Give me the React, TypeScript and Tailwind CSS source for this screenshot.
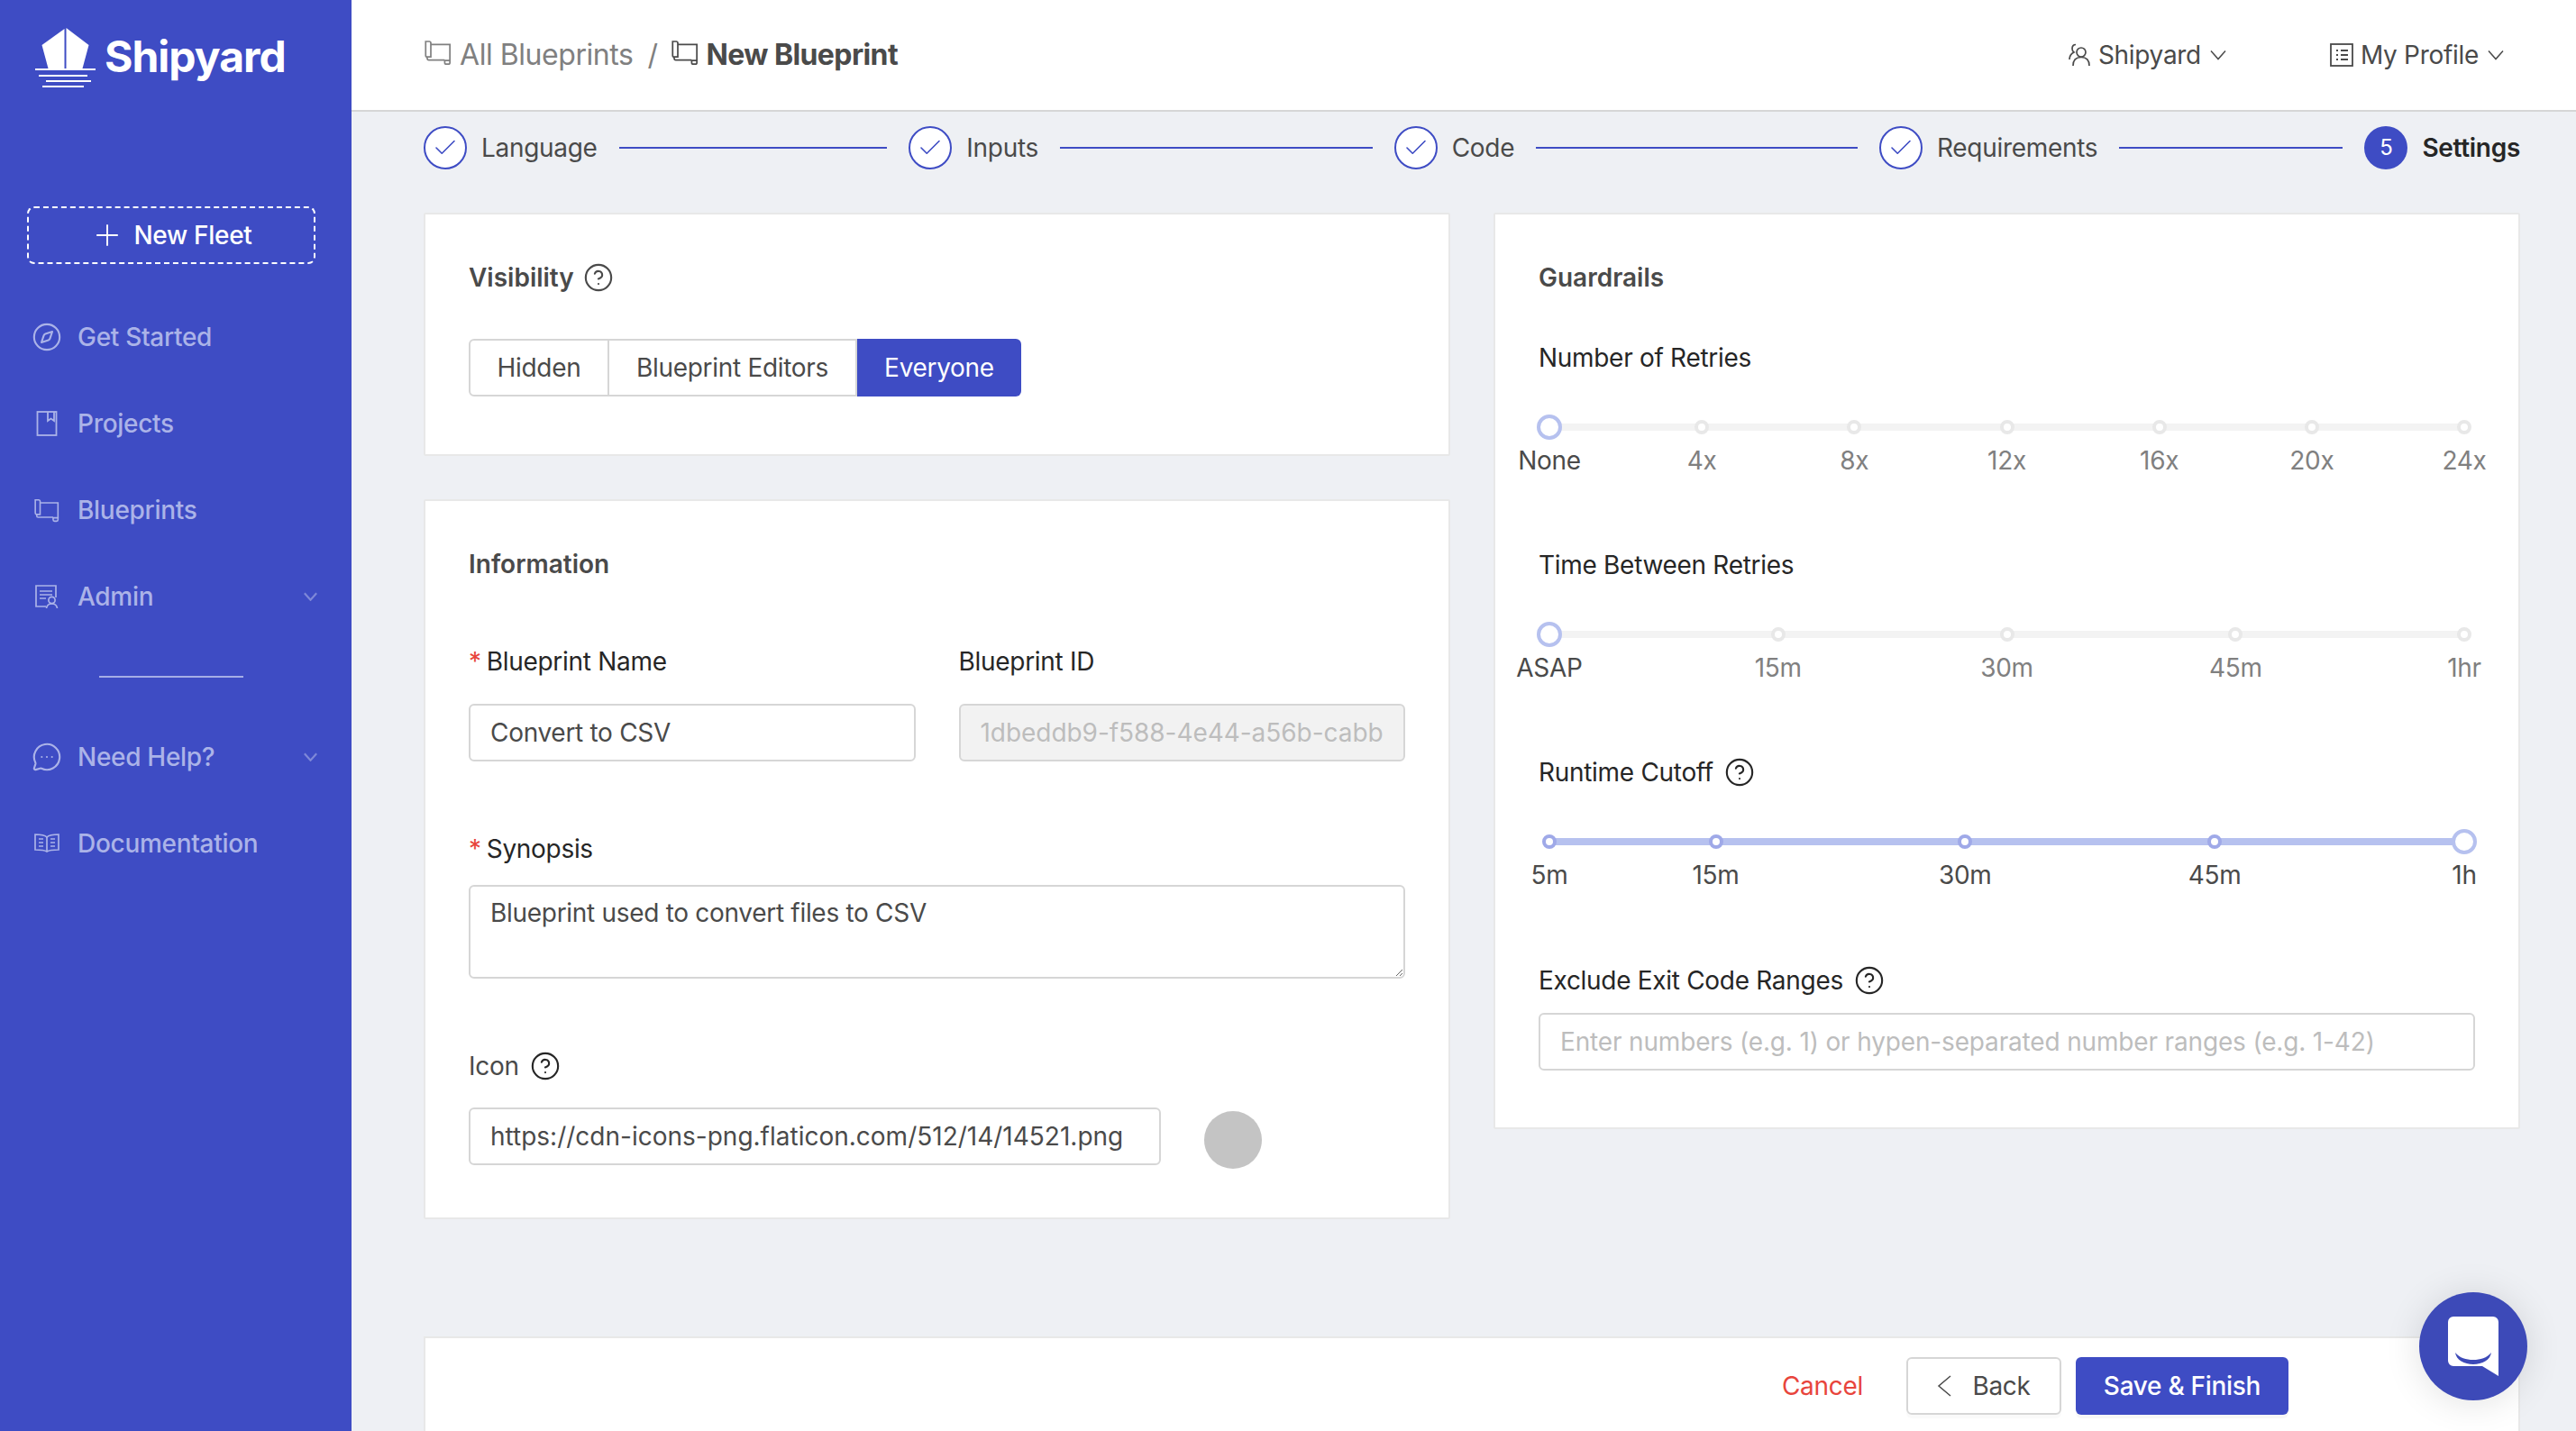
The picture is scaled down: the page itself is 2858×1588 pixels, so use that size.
import { Check, Plus, Compass, CircleHelp, MessageCircleMore } from "lucide-react";

const Chev = ({ className, strokeWidth = 1.6 }: { className?: string; strokeWidth?: number }) => (
  <svg viewBox="0 0 18 12" fill="none" stroke="currentColor" strokeWidth={strokeWidth} className={className}>
    <path d="M1 1.500 L9 10.500 L17 1.500" />
  </svg>
);

const Scroll = ({ className }: { className?: string }) => (
  <svg viewBox="0 0 28 28" fill="none" stroke="currentColor" strokeWidth="1.5" className={className}>
    <path d="M2 3.500h3.500a1.500 1.500 0 0 1 1.500 1.500v13.500H3.500A1.500 1.500 0 0 1 2 17V3.500z" />
    <path d="M7 6.500h18.500V22" />
    <path d="M3.500 18.500V20a1.500 1.500 0 0 0 1.500 1.500h15.500" />
    <path d="M20.500 21.500V24a1.500 1.500 0 0 0 1.500 1.500h2a1.500 1.500 0 0 0 1.500-1.500v-2h-5" />
  </svg>
);

const Book = ({ className }: { className?: string }) => (
  <svg viewBox="0 0 28 28" fill="none" stroke="currentColor" strokeWidth="1.8" className={className}>
    <rect x="3.500" y="1" width="21" height="26" />
    <path d="M15 1v10l3.500-2.500L22 11V1" />
  </svg>
);

const AdminIcon = ({ className }: { className?: string }) => (
  <svg viewBox="0 0 28 28" fill="none" stroke="currentColor" strokeWidth="1.7" className={className}>
    <path d="M13 25H2V2h22v13" />
    <path d="M6 8h14M6 12h14M6 16h7" />
    <circle cx="19.500" cy="18" r="3.600" />
    <path d="M13.500 27c.5-3.500 3-5 6-5s5.500 1.500 6 5" />
  </svg>
);

const DocsIcon = ({ className }: { className?: string }) => (
  <svg viewBox="0 0 28 24" fill="none" stroke="currentColor" strokeWidth="1.7" className={className}>
    <path d="M14 5C12 3 8 2 1 2v17c7 0 10 0 13 2 3-2 6-2 13-2V2c-7 0-11 1-13 3z" />
    <path d="M14 5v16M5 7h5M5 11h5M5 15h5M18 7h5M18 11h5M18 15h5" />
  </svg>
);

const TeamIcon = ({ className }: { className?: string }) => (
  <svg viewBox="0 0 28 28" fill="none" stroke="currentColor" strokeWidth="1.7" className={className}>
    <circle cx="16" cy="11" r="5" />
    <path d="M7 26c0-6 3-9.500 9-9.500s9 3.500 9 9.500" />
    <path d="M10 2.500c-2.500 0-4 2-4 4.500 0 1.500.5 3 2 4-3 1.500-5 4-5 8" />
  </svg>
);

const ListIcon = ({ className }: { className?: string }) => (
  <svg viewBox="0 0 28 28" fill="none" stroke="currentColor" strokeWidth="1.8" className={className}>
    <rect x="2" y="2" width="24" height="24" />
    <path d="M8 9h2M13 9h8M8 14h2M13 14h8M8 19h2M13 19h8" />
  </svg>
);

const Logo = () => (
  <svg viewBox="0 0 68 68" className="h-[68px] w-[68px] shrink-0" fill="white">
    <path d="M32.500 1 L7.500 19 L14.500 45 H32.500 Z" />
    <path d="M34.500 0 L59.500 19 L52.500 45 H34.500 Z" />
    <rect x="0" y="45" width="67" height="2" />
    <rect x="4" y="52" width="54" height="2" />
    <rect x="12" y="58" width="50" height="2" />
    <rect x="8" y="64" width="46" height="2" />
  </svg>
);

const NavItem = ({ icon, label, chevron }: { icon: React.ReactNode; label: string; chevron?: boolean }) => (
  <div className="flex h-24 items-center pl-[38px] pr-[38px] text-[#abb3e8]">
    <span className="flex w-[28px] items-center justify-center">{icon}</span>
    <span className="ml-[20px] flex-1 text-[28px] font-medium">{label}</span>
    {chevron && <Chev className="h-[10px] w-[15px] text-[#7e88d8]" strokeWidth={2.6} />}
  </div>
);

const Step = ({ label, last }: { label: string; last?: boolean }) => (
  <div className={last ? "flex items-center" : "flex flex-1 items-center"}>
    {last ? (
      <span className="flex h-12 w-12 items-center justify-center rounded-full bg-[#3e4cc4] text-[24px] text-white">5</span>
    ) : (
      <span className="flex h-12 w-12 items-center justify-center rounded-full border-2 border-[#3e4cc4] bg-white text-[#3e4cc4]">
        <Check className="h-[30px] w-[30px]" strokeWidth={1.3} />
      </span>
    )}
    <span className={last ? "ml-4 text-[28px] font-semibold text-[#262626]" : "ml-4 text-[28px] text-[#4a4a4a]"}>{label}</span>
    {!last && <span className="ml-6 mr-6 h-[2px] flex-1 bg-[#3e4cc4]" />}
  </div>
);

type Mark = { label: string; pos: number };

const Slider = ({ marks, filled }: { marks: Mark[]; filled?: boolean }) => (
  <div className="relative mx-[12px] mt-[41px] h-[28px]">
    <div className={filled ? "absolute inset-x-0 top-[10px] h-[8px] bg-[#b6c1ef]" : "absolute inset-x-0 top-[10px] h-[8px] bg-[#f3f3f3]"} />
    {marks.map((m, i) => {
      const active = filled ? i === marks.length - 1 : i === 0;
      return (
        <div key={m.label} className="absolute top-0 h-[28px] w-0" style={{ left: `${m.pos}%` }}>
          {active ? (
            <span className="absolute left-[-14px] top-0 h-[28px] w-[28px] rounded-full border-[4px] border-[#b6c1ef] bg-white" />
          ) : (
            <span
              className={
                filled
                  ? "absolute left-[-8px] top-[6px] h-[16px] w-[16px] rounded-full border-[4px] border-[#9fa9e8] bg-white"
                  : "absolute left-[-8px] top-[6px] h-[16px] w-[16px] rounded-full border-[4px] border-[#e8e8e8] bg-white"
              }
            />
          )}
          <span
            className={
              active || filled
                ? "absolute left-[-100px] top-[33px] w-[200px] text-center text-[28px] leading-[36px] text-[#4a4a4a]"
                : "absolute left-[-100px] top-[33px] w-[200px] text-center text-[28px] leading-[36px] text-[#808080]"
            }
          >
            {m.label}
          </span>
        </div>
      );
    })}
  </div>
);

const even = (labels: string[]): Mark[] => labels.map((label, i) => ({ label, pos: (i / (labels.length - 1)) * 100 }));

const Help = ({ className }: { className?: string }) => <CircleHelp className={className} strokeWidth={1.5} />;

const inputCls =
  "h-16 rounded-[6px] border-2 border-[#d6d6d6] bg-white px-[22px] text-[28px] text-[#4a4a4a] outline-none placeholder:text-[#bdbdbd]";

export default function App() {
  return (
    <div className="flex h-screen w-full overflow-hidden bg-[#eef0f4] font-['Inter',sans-serif] text-[28px] tracking-[-0.3px]">
      <aside className="flex w-[390px] shrink-0 flex-col bg-[#3e4cc4]">
        <div className="flex h-[130px] pl-[39px] pt-[31px]">
          <Logo />
          <span className="ml-[9px] mt-[3px] text-[48px] font-bold leading-[58px] tracking-[-1px] text-white">Shipyard</span>
        </div>
        <div className="ml-[30px] mt-[99px] flex h-16 w-[320px] items-center justify-center rounded-[8px] border-2 border-dashed border-white text-white">
          <Plus className="h-[38px] w-[38px]" strokeWidth={1.2} />
          <span className="ml-[10px] text-[28px] font-medium">New Fleet</span>
        </div>
        <div className="mt-[33px] flex flex-col">
          <NavItem icon={<Compass className="h-[34px] w-[34px] shrink-0" strokeWidth={1.5} />} label="Get Started" />
          <NavItem icon={<Book className="h-[28px] w-[28px] shrink-0" />} label="Projects" />
          <NavItem icon={<Scroll className="h-[30px] w-[30px] shrink-0" />} label="Blueprints" />
          <NavItem icon={<AdminIcon className="h-[28px] w-[28px] shrink-0" />} label="Admin" chevron />
        </div>
        <div className="ml-[110px] mt-[40px] h-[2px] w-[160px] bg-[#a5aee6]" />
        <div className="mt-[40px] flex flex-col">
          <NavItem icon={<MessageCircleMore className="h-[34px] w-[34px] shrink-0" strokeWidth={1.5} />} label="Need Help?" chevron />
          <NavItem icon={<DocsIcon className="h-[26px] w-[28px] shrink-0" />} label="Documentation" />
        </div>
      </aside>

      <div className="flex min-w-0 flex-1 flex-col">
        <header className="flex h-[124px] shrink-0 items-center border-b-2 border-[#d6d6d6] bg-white pl-[80px] pr-[80px]">
          <div className="flex flex-1 items-center text-[32px] tracking-[-0.45px]">
            <Scroll className="mb-[6px] h-[32px] w-[32px] text-[#808080]" />
            <span className="ml-[8px] text-[#808080]">All Blueprints</span>
            <span className="ml-[16px] text-[#808080]">/</span>
            <Scroll className="mb-[6px] ml-[15px] h-[32px] w-[32px] text-[#4a4a4a]" />
            <span className="ml-[7px] font-bold tracking-[-0.6px] text-[#4a4a4a]">New Blueprint</span>
          </div>
          <div className="flex items-center text-[#4a4a4a]">
            <TeamIcon className="h-[28px] w-[28px]" />
            <span className="ml-[7px]">Shipyard</span>
            <Chev className="ml-[10px] h-[12px] w-[18px]" strokeWidth={1.5} />
          </div>
          <div className="ml-[114px] flex items-center text-[#4a4a4a]">
            <ListIcon className="h-[28px] w-[28px]" />
            <span className="ml-[7px]">My Profile</span>
            <Chev className="ml-[10px] h-[12px] w-[18px]" strokeWidth={1.5} />
          </div>
        </header>

        <main className="flex flex-col pl-[80px] pr-[62px] pt-[16px]">
          <div className="flex">
            <Step label="Language" />
            <Step label="Inputs" />
            <Step label="Code" />
            <Step label="Requirements" />
            <Step label="Settings" last />
          </div>

          <div className="mt-[48px] grid grid-cols-2 items-start gap-x-[48px]">
            <div className="flex flex-col gap-y-[48px]">
              <section className="rounded-[2px] border-2 border-[#e8e8e8] bg-white px-12 pb-[64px] pt-12">
                <div className="flex h-[44px] items-center font-semibold tracking-normal text-[#4a4a4a]">
                  Visibility
                  <Help className="ml-[10px] h-[34px] w-[34px]" />
                </div>
                <div className="mt-[46px] flex h-16 w-fit text-[#4a4a4a]">
                  <span className="flex w-[156px] items-center justify-center rounded-l-[6px] border-2 border-[#d6d6d6]">Hidden</span>
                  <span className="flex w-[275px] items-center justify-center border-y-2 border-r-2 border-[#d6d6d6]">Blueprint Editors</span>
                  <span className="flex w-[182px] items-center justify-center rounded-r-[6px] bg-[#3e4cc4] text-white">Everyone</span>
                </div>
              </section>

              <section className="rounded-[2px] border-2 border-[#e8e8e8] bg-white px-12 pb-[54px] pt-12">
                <div className="flex h-[44px] items-center font-semibold tracking-normal text-[#4a4a4a]">Information</div>
                <div className="mt-[64px] grid grid-cols-2 gap-x-[48px]">
                  <div className="flex flex-col">
                    <label className="flex h-[44px] items-center text-[#262626]">
                      <span className="mr-[6px] text-[#e8453c]">*</span>Blueprint Name
                    </label>
                    <input readOnly value="Convert to CSV" className={`${inputCls} mt-[25px] w-full`} />
                  </div>
                  <div className="flex flex-col">
                    <label className="flex h-[44px] items-center text-[#262626]">Blueprint ID</label>
                    <input
                      readOnly
                      value="1dbeddb9-f588-4e44-a56b-cabb"
                      className="mt-[25px] h-16 w-full rounded-[6px] border-2 border-[#d6d6d6] bg-[#f2f2f2] px-[22px] text-[28px] tracking-[-0.05px] text-[#bdbdbd] outline-none"
                    />
                  </div>
                </div>
                <label className="mt-[75px] flex h-[44px] items-center text-[#262626]">
                  <span className="mr-[6px] text-[#e8453c]">*</span>Synopsis
                </label>
                <textarea
                  readOnly
                  value="Blueprint used to convert files to CSV"
                  className="mt-[18px] block h-[104px] w-full rounded-[6px] border-2 border-[#d6d6d6] bg-white px-[22px] py-[11px] text-[28px] leading-[36px] text-[#4a4a4a] outline-none"
                />
                <label className="mt-[75px] flex h-[44px] items-center text-[#4a4a4a]">
                  Icon
                  <Help className="ml-[12px] h-[34px] w-[34px] text-[#262626]" />
                </label>
                <div className="mt-[24px] flex items-start">
                  <input
                    readOnly
                    value="https://cdn-icons-png.flaticon.com/512/14/14521.png"
                    className={`${inputCls} w-[768px] tracking-normal`}
                  />
                  <span className="ml-[48px] mt-[4px] h-16 w-16 rounded-full bg-[#c4c4c4]" />
                </div>
              </section>
            </div>

            <section className="rounded-[2px] border-2 border-[#e8e8e8] bg-white px-12 pb-[63px] pt-12">
              <div className="flex h-[44px] items-center font-semibold tracking-normal text-[#4a4a4a]">Guardrails</div>
              <div className="mt-[45px] h-[230px]">
                <div className="flex h-[44px] items-center text-[#262626]">Number of Retries</div>
                <Slider marks={even(["None", "4x", "8x", "12x", "16x", "20x", "24x"])} />
              </div>
              <div className="h-[230px]">
                <div className="flex h-[44px] items-center text-[#262626]">Time Between Retries</div>
                <Slider marks={even(["ASAP", "15m", "30m", "45m", "1hr"])} />
              </div>
              <div className="h-[231px]">
                <div className="flex h-[44px] items-center text-[#262626]">
                  Runtime Cutoff
                  <Help className="ml-[12px] h-[34px] w-[34px]" />
                </div>
                <Slider
                  filled
                  marks={[
                    { label: "5m", pos: 0 },
                    { label: "15m", pos: 18.18 },
                    { label: "30m", pos: 45.45 },
                    { label: "45m", pos: 72.73 },
                    { label: "1h", pos: 100 },
                  ]}
                />
              </div>
              <div className="flex h-[44px] items-center text-[#262626]">
                Exclude Exit Code Ranges
                <Help className="ml-[12px] h-[34px] w-[34px]" />
              </div>
              <input
                readOnly
                placeholder="Enter numbers (e.g. 1) or hypen-separated number ranges (e.g. 1-42)"
                className={`${inputCls} mt-[14px] w-full tracking-[-0.16px]`}
              />
            </section>
          </div>

          <div className="mt-[130px] flex h-[120px] shrink-0 items-start justify-end border-2 border-b-0 border-[#e8e8e8] bg-white pr-[255px] pt-[21px]">
            <span className="mr-[48px] flex h-16 items-center text-[#e8453c]">Cancel</span>
            <span className="flex h-16 w-[172px] items-center justify-center rounded-[6px] border-2 border-[#d6d6d6] text-[#4a4a4a] shadow-[0_4px_0_rgba(0,0,0,0.02)]">
              <svg viewBox="0 0 16 24" fill="none" stroke="currentColor" strokeWidth="1.5" className="h-[24px] w-[16px]">
                <path d="M15 1 L2 12 L15 23" />
              </svg>
              <span className="ml-[23px]">Back</span>
            </span>
            <span className="ml-[16px] flex h-16 w-[236px] items-center justify-center rounded-[6px] bg-[#3e4cc4] font-medium text-white shadow-[0_4px_0_rgba(0,0,0,0.03)]">
              Save &amp; Finish
            </span>
          </div>
        </main>
      </div>

      <div className="absolute left-[2684px] top-[1434px] flex h-[120px] w-[120px] items-center justify-center rounded-full bg-[#3d4ab8] shadow-[0_2px_40px_rgba(0,0,0,0.12)]">
        <svg viewBox="0 0 56 66" className="h-[66px] w-[56px]">
          <path d="M6 0h44a6 6 0 0 1 6 6v60l-18-11H6a6 6 0 0 1-6-6V6a6 6 0 0 1 6-6z" fill="white" />
          <path d="M8 40c5 6 12 8 20 8s15-2 20-8c-1 8-10 13-20 13S9 48 8 40z" fill="#3d4ab8" />
        </svg>
      </div>
    </div>
  );
}
